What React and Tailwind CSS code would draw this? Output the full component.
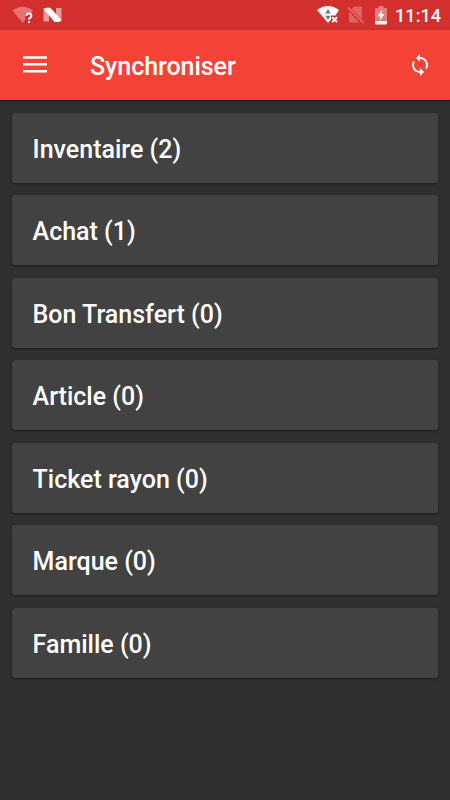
const items = [
  ['Inventaire', 2],
  ['Achat', 1],
  ['Bon Transfert', 0],
  ['Article', 0],
  ['Ticket rayon', 0],
  ['Marque', 0],
  ['Famille', 0],
];

function WifiUnknown() {
  return (
    <svg width="22" height="20" viewBox="0 0 22 20" className="shrink-0">
      <path d="M0.5 5.5Q10.5-2 21 5.5L19.5 8H13V15L10.8 18Z" fill="#e57373" />
      <path d="M14.3 10.8C14.3 7.6 19.4 7.6 19.4 10.7C19.4 12.7 17 12.8 17 14.8M17 16V18" fill="none" stroke="#fff" strokeWidth="2" />
    </svg>
  );
}

function AndroidN() {
  return (
    <svg width="20" height="16" viewBox="0 0 20 16" className="shrink-0">
      <path d="M1.5 1H7V14.5H1.5ZM14 1H19.5V14.5H14Z" fill="#eb9999" />
      <path d="M2 2.5L4.5 0.8H8.3L19.5 13L17 15H12.7Z" fill="#fff" />
    </svg>
  );
}

function WifiOff() {
  return (
    <svg width="22" height="20" viewBox="0 0 22 20" className="shrink-0">
      <path d="M0 5Q11-3.2 22 5L18.5 10.5H14V14.5L11 18Z" fill="#fff" />
      <path d="M8.3 8.5L11 4L13.7 8.5ZM8.3 10.7H13.7L11 15Z" fill="#777" />
      <path d="M15.2 12.3L20 17.1M20 12.3L15.2 17.1" stroke="#fff" strokeWidth="2" />
    </svg>
  );
}

function NoSim() {
  return (
    <svg width="18" height="18" viewBox="0 0 18 18" className="shrink-0">
      <path d="M7 0.5H14Q15 0.5 15 1.5V13.2L4.5 3ZM2 5.8L12.5 16.5H3Q2 16.5 2 15.5Z" fill="#e06464" />
      <path d="M1 1.5L16.3 16.8" stroke="#e57b7b" strokeWidth="1.4" />
    </svg>
  );
}

function Battery() {
  return (
    <svg width="12" height="19" viewBox="0 0 12 19" className="shrink-0">
      <path d="M0 3Q0 2 1 2H3.5V0H8.5V2H11Q12 2 12 3V15H0Z" fill="#e67c7c" />
      <path d="M0 15H12V17.5Q12 18.5 11 18.5H1Q0 18.5 0 17.5Z" fill="#fff" />
      <path d="M7 4L2.4 10.2H5V14.2L9.6 8H7Z" fill="#fff" />
    </svg>
  );
}

export default function App() {
  return (
    <div className="flex h-[800px] w-[450px] flex-col overflow-hidden bg-[#303030] font-['Roboto',sans-serif] font-medium text-white">
      <div className="flex h-[30px] shrink-0 items-center bg-[#d32f2f] pl-3 pr-[10px]">
        <WifiUnknown />
        <div className="ml-2"><AndroidN /></div>
        <div className="ml-auto flex items-center">
          <WifiOff />
          <div className="ml-2"><NoSim /></div>
          <div className="ml-[10px]"><Battery /></div>
          <span className="ml-2 w-[45px] whitespace-nowrap pt-[2px] text-[18px] leading-[28px] tracking-[0.1px]">11:14</span>
        </div>
      </div>
      <header className="relative flex h-[70px] shrink-0 items-center bg-[#f44336] pl-[23px] pr-[18px] shadow-[0_1px_2px_rgba(0,25,25,0.8)]">
        <svg width="24" height="18" viewBox="0 0 24 18">
          <path d="M0 0.2H24V2.8H0ZM0 7H24V9.6H0ZM0 14H24V16.6H0Z" fill="#fff" />
        </svg>
        <h1 className="ml-[43px] pt-[3px] text-[25px] leading-[30px] tracking-[-0.05px]">Synchroniser</h1>
        <svg width="24" height="24" viewBox="0 0 24 24" className="ml-auto" fill="#fff">
          <path d="M12 4V1L8 5l4 4V6c3.31 0 6 2.69 6 6 0 1.01-.25 1.97-.7 2.8l1.46 1.46A7.93 7.93 0 0 0 20 12c0-4.42-3.58-8-8-8zm0 14c-3.31 0-6-2.69-6-6 0-1.01.25-1.97.7-2.8L5.24 7.74A7.93 7.93 0 0 0 4 12c0 4.42 3.58 8 8 8v3l4-4-4-4v3z" />
        </svg>
      </header>
      <main className="flex flex-col gap-[12.5px] px-[12.4px] pt-[12.5px]">
        {items.map(([name, count]) => (
          <div key={name} className="flex h-[70px] items-center rounded-[3px] bg-[#424242] pl-[20.2px] pt-[4.4px] text-[25px] leading-[30px] shadow-[0_1px_3px_rgba(0,0,0,0.45)]">
            {name} ({count})
          </div>
        ))}
      </main>
    </div>
  );
}
